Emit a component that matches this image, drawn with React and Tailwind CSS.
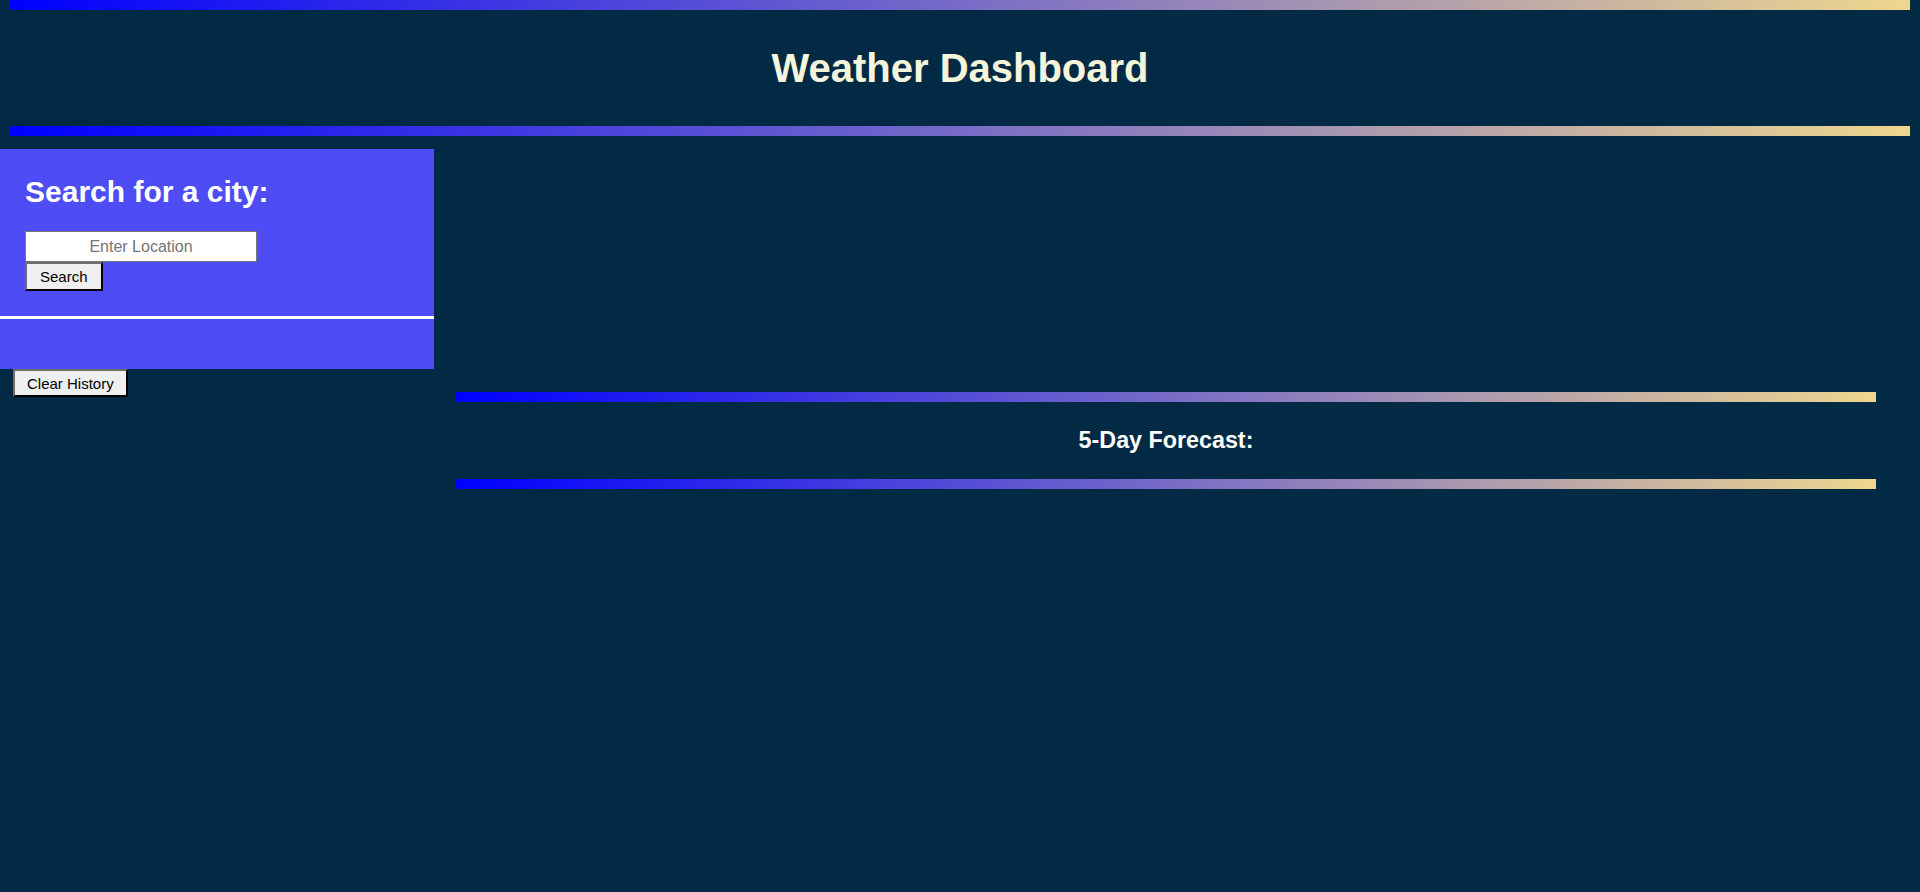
import React, { useState } from "react";

const Bar = ({ className = "" }) => (
  <div className={`h-[10px] bg-[linear-gradient(to_right,#0000ff,#efd68f)] ${className}`} />
);

const App = () => {
  const [city, setCity] = useState("");
  const [history, setHistory] = useState([]);

  const handleSearch = (e) => {
    e.preventDefault();
    if (!city.trim()) return;
    setHistory((prev) => [...prev, city.trim()]);
    setCity("");
  };

  return (
    <div className="min-h-[892px] bg-[#032a45] font-['Liberation_Sans',Arial,sans-serif]">
      {/* Header */}
      <header>
        <Bar className="mx-[10px]" />
        <h1 className="mt-[35px] mb-[35px] text-center text-[40px] leading-[46px] font-bold text-[#f5f5dc]">
          Weather Dashboard
        </h1>
        <Bar className="mx-[10px]" />
      </header>

      <main className="mt-[13px] flex">
        {/* Search column */}
        <aside className="w-[434px] shrink-0">
          <div className="bg-[#4e4df5]">
            <form onSubmit={handleSearch} className="px-[25px] pt-[26px] pb-[25px]">
              <h2 className="text-[30px] leading-[34px] font-bold text-white">Search for a city:</h2>
              <input
                type="text"
                value={city}
                onChange={(e) => setCity(e.target.value)}
                placeholder="Enter Location"
                className="mt-[22px] block h-[31px] w-[232px] border border-[#767676] bg-white text-center text-[16px] text-black placeholder:text-[#757575] outline-none"
              />
              <button
                type="submit"
                className="block h-[29px] border-2 border-t-[#6e6e6e] border-l-[#6e6e6e] border-b-black border-r-black bg-[#efefef] px-[13px] text-[15px] leading-[17px] text-black"
              >
                Search
              </button>
            </form>
            <div className="h-[3px] bg-white" />
            <ul className="min-h-[50px]">
              {history.map((item, i) => (
                <li key={i} className="px-[25px] py-1 text-white">
                  {item}
                </li>
              ))}
            </ul>
          </div>
          <button
            onClick={() => setHistory([])}
            className="ml-[13px] h-[28px] border-2 border-t-[#6e6e6e] border-l-[#6e6e6e] border-b-black border-r-black bg-[#efefef] px-[12px] text-[15px] leading-[17px] text-black"
          >
            Clear History
          </button>
        </aside>

        {/* Forecast column */}
        <section className="flex-1 pt-[243px]">
          <Bar className="ml-[22px] mr-[44px]" />
          <h3 className="my-[25px] ml-[22px] mr-[44px] text-center text-[23.3px] leading-[27px] font-bold text-white">
            5-Day Forecast:
          </h3>
          <Bar className="ml-[22px] mr-[44px]" />
        </section>
      </main>
    </div>
  );
};

export default App;
